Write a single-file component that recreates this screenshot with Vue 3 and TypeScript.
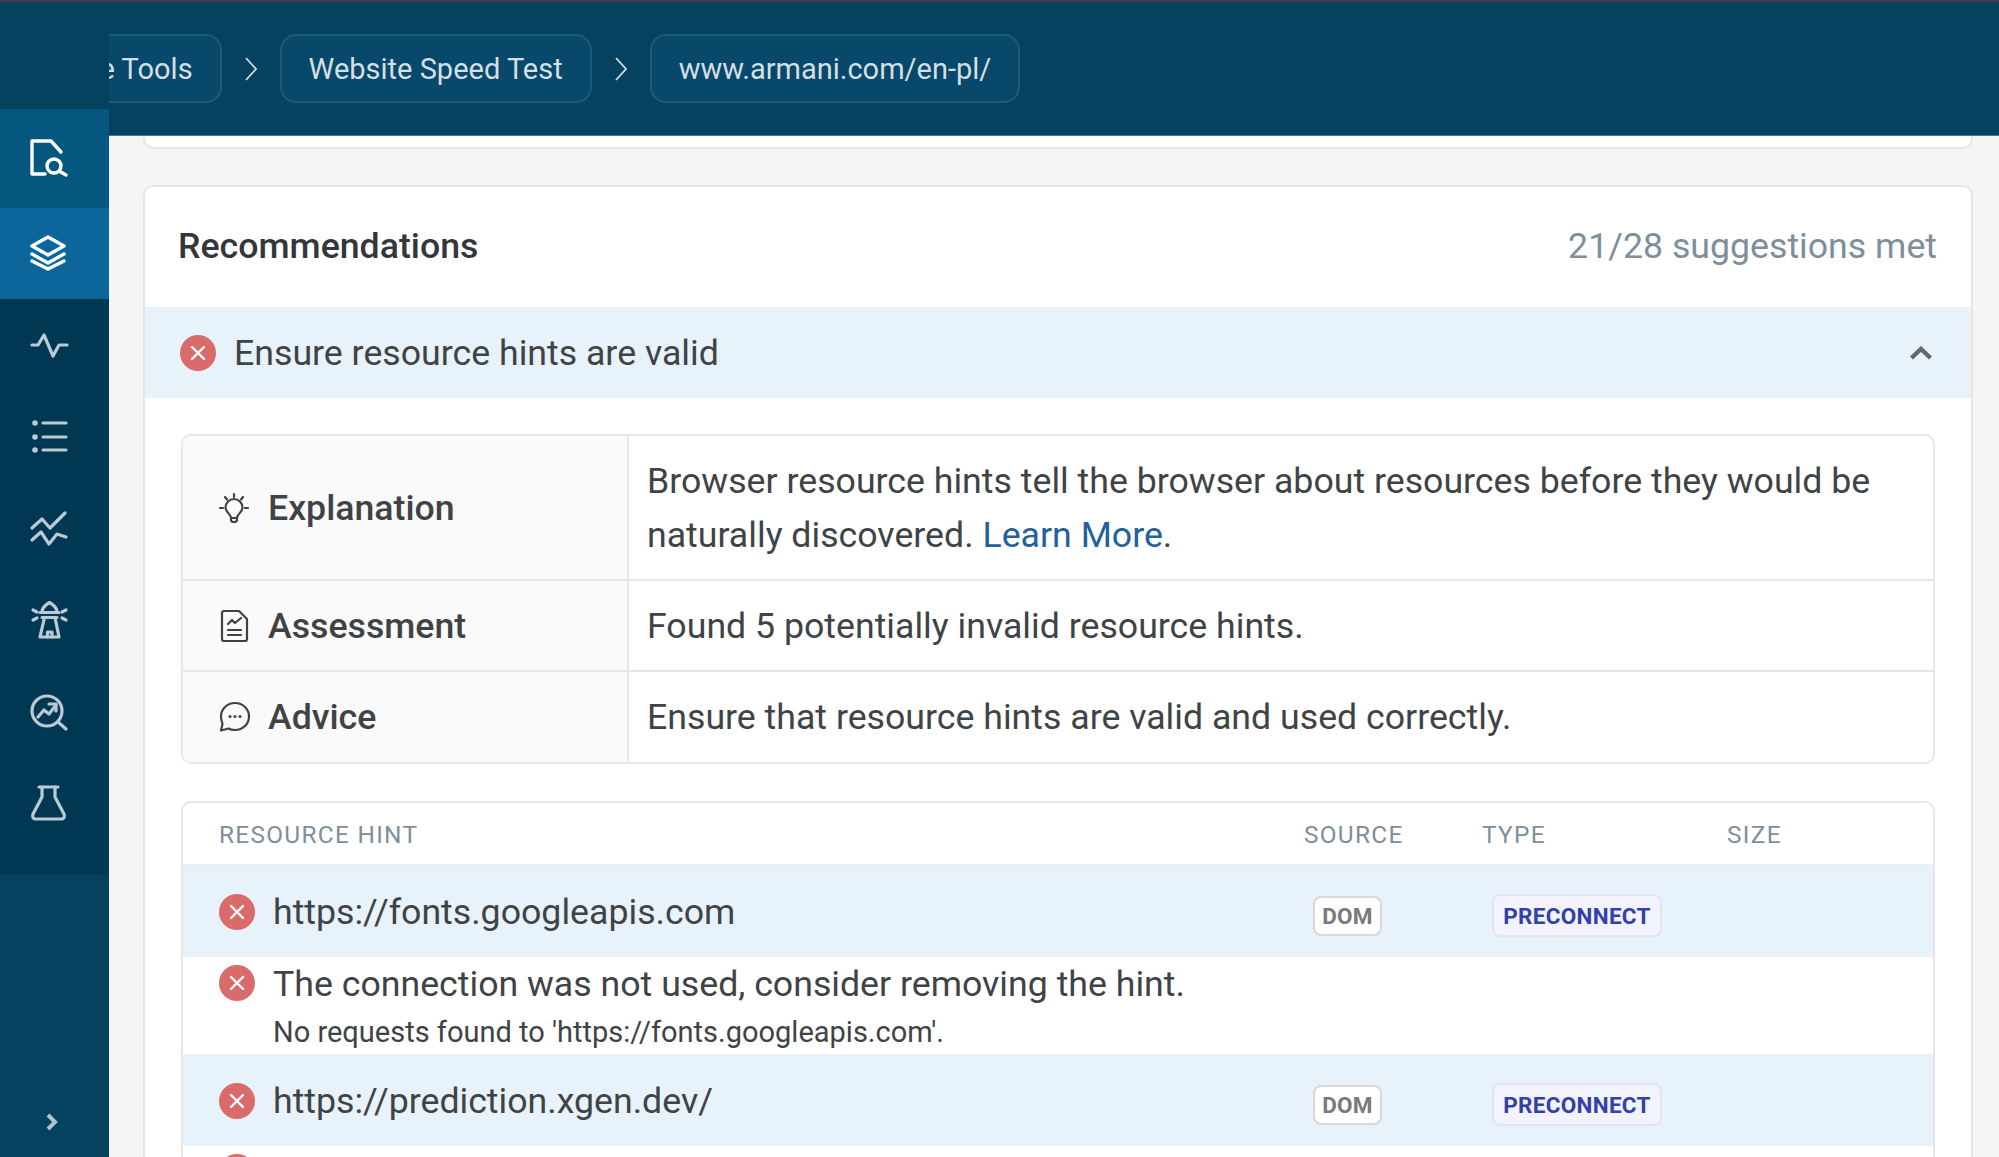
<script setup lang="ts">
const hints = [
  { url: 'https://fonts.googleapis.com', msg: 'The connection was not used, consider removing the hint.', sub: "No requests found to 'https://fonts.googleapis.com'." },
  { url: 'https://prediction.xgen.dev/', msg: 'The connection was not used, consider removing the hint.', sub: "No requests found to 'https://prediction.xgen.dev/'." }
]
</script>

<template>
  <div class="app">
    <aside class="side">
      <div class="side-top"></div>
      <div class="nav n1">
        <svg class="ic" viewBox="0 0 36 36"><path d="M14 34H1V1H20L30 12" /><circle cx="23" cy="26" r="7" /><path d="M28 31L35 35" /></svg>
      </div>
      <div class="nav n2">
        <svg class="ic" viewBox="0 0 36 36"><path d="M17 1L33 10L17 19L1 10Z" /><path d="M1 18L17 27L33 18" /><path d="M1 25L17 33L33 25" /></svg>
      </div>
      <div class="dark">
        <div class="nav">
          <svg class="ic" viewBox="0 0 36 36"><path d="M1 17H7L13 7L22 28L28 17H36" /></svg>
        </div>
        <div class="nav">
          <svg class="ic" viewBox="0 0 36 36"><circle class="fill" cx="4" cy="4" r="2.8" /><circle class="fill" cx="4" cy="18" r="2.8" /><circle class="fill" cx="4" cy="31" r="2.8" /><path d="M12 4H35M12 18H35M12 31H35" /></svg>
        </div>
        <div class="nav">
          <svg class="ic" viewBox="0 0 36 36"><path d="M1 17L11 8L19 17L34 2" /><path d="M1 29L10 21L18 33L26 23L35 26" /></svg>
        </div>
        <div class="nav">
          <svg class="ic" viewBox="0 0 36 36"><path d="M11 10C11 5 15 2.5 18.5 0.5C22 2.5 26 5 26 10" /><path d="M9 10.5H28M11 15.5H26" /><path d="M13.5 15.5L9 35H28L24 15.5" /><path d="M16.5 35V30H21V35" /><path d="M2 8L6 10M2 18L6 16M35 8L31 10M35 18L31 16" /></svg>
        </div>
        <div class="nav">
          <svg class="ic" viewBox="0 0 36 36"><circle cx="16" cy="17" r="15" /><path d="M27 28L35 35" /><path d="M7 23L13 16L18 20L25 11" /><path d="M18 10H25V17" /></svg>
        </div>
        <div class="nav">
          <svg class="ic" viewBox="0 0 36 36"><path d="M8 2H27" /><path d="M11 2V12L2 29C1 32 2 34 5 34H30C33 34 34 32 33 29L24 12V2" /></svg>
        </div>
      </div>
      <div class="side-foot">
        <svg class="expand" viewBox="0 0 12 18"><path d="M2 2L9 9L2 16" /></svg>
      </div>
    </aside>

    <main class="main">
      <header class="top">
        <nav class="crumbs">
          <a class="crumb first">Free Tools</a>
          <svg class="sep" viewBox="0 0 14 26"><path d="M2 2L12 13L2 24" /></svg>
          <a class="crumb">Website Speed Test</a>
          <svg class="sep" viewBox="0 0 14 26"><path d="M2 2L12 13L2 24" /></svg>
          <a class="crumb">www.armani.com/en-pl/</a>
        </nav>
      </header>

      <div class="content">
        <div class="stub"></div>
        <section class="card">
          <div class="card-head">
            <h2>Recommendations</h2>
            <span class="met">21/28 suggestions met</span>
          </div>
          <div class="rec-row">
            <svg class="err" viewBox="0 0 36 36"><circle cx="18" cy="18" r="18" /><path d="M12 12L24 24M24 12L12 24" /></svg>
            <span class="rec-title">Ensure resource hints are valid</span>
            <svg class="up" viewBox="0 0 24 14"><path d="M2.5 12L12 3L21.5 12" /></svg>
          </div>

          <div class="panel">
            <div class="p-row tall">
              <div class="p-label">
                <svg class="lab-ic" viewBox="0 0 30 30"><path d="M15 1V4M6 4L8 6.5M24 4L22 6.5M1 15H4M26 15H29" /><path d="M12 25C12 21 6.5 19.5 6.5 14.5C6.5 10 10.5 6 15 6C19.5 6 23.5 10 23.5 14.5C23.5 19.5 18 21 18 25Z" /><path d="M12 25V27C12 28.5 13 29 15 29C17 29 18 28.5 18 27V25" /></svg>
                <span>Explanation</span>
              </div>
              <div class="p-val">Browser resource hints tell the browser about resources before they would be naturally discovered. <a class="link">Learn More</a>.</div>
            </div>
            <div class="p-row">
              <div class="p-label">
                <svg class="lab-ic" viewBox="0 0 30 30"><path d="M5 0H20L28 8V28C28 29 27 30 26 30H5C4 30 3 29 3 28V2C3 1 4 0 5 0Z" /><path d="M9 13L13 9L16 12L22 7" /><path d="M9 19H22M9 24H22" /></svg>
                <span>Assessment</span>
              </div>
              <div class="p-val">Found 5 potentially invalid resource hints.</div>
            </div>
            <div class="p-row last">
              <div class="p-label">
                <svg class="lab-ic" viewBox="0 0 30 30"><path d="M16 1C24 1 30 7 30 14.5C30 22 24 28 16 28C13 28 11 27.5 9.5 26.5L2 28.5L3.5 22C2.5 19.5 2 17 2 14.5C2 7 8 1 16 1Z" /><circle class="dot" cx="11" cy="14.5" r="1.5" /><circle class="dot" cx="16" cy="14.5" r="1.5" /><circle class="dot" cx="21" cy="14.5" r="1.5" /></svg>
                <span>Advice</span>
              </div>
              <div class="p-val">Ensure that resource hints are valid and used correctly.</div>
            </div>
          </div>

          <div class="table">
            <div class="t-head">
              <span>RESOURCE HINT</span>
              <span>SOURCE</span>
              <span>TYPE</span>
              <span>SIZE</span>
            </div>
            <template v-for="h in hints" :key="h.url">
              <div class="t-row">
                <div class="url-cell">
                  <svg class="err" viewBox="0 0 36 36"><circle cx="18" cy="18" r="18" /><path d="M12 12L24 24M24 12L12 24" /></svg>
                  <span class="url">{{ h.url }}</span>
                </div>
                <div class="c-src"><span class="dom">DOM</span></div>
                <div class="c-type"><span class="pre">PRECONNECT</span></div>
                <div></div>
              </div>
              <div class="t-detail">
                <svg class="err" viewBox="0 0 36 36"><circle cx="18" cy="18" r="18" /><path d="M12 12L24 24M24 12L12 24" /></svg>
                <div class="d-text">
                  <div class="d-msg">{{ h.msg }}</div>
                  <div class="d-sub">{{ h.sub }}</div>
                </div>
              </div>
            </template>
          </div>
        </section>
      </div>
    </main>
  </div>
</template>

<style>
html, body { margin: 0; background: #f5f5f5; }
</style>

<style scoped>
.app {
  display: flex;
  height: 1157px;
  overflow: hidden;
  font-family: Roboto, "Liberation Sans", sans-serif;
  color: #3f4346;
  background: #f5f5f5;
}
.side {
  width: 109px;
  flex: none;
  display: flex;
  flex-direction: column;
  background: #04425f;
  border-top: 2px solid #4a3b49;
  box-sizing: border-box;
}
.side-top { height: 107px; flex: none; }
.nav {
  height: 91.5px;
  flex: none;
  display: flex;
  align-items: center;
  padding-left: 31px;
  box-sizing: border-box;
}
.n1 { height: 99px; padding-bottom: 2px; background: #06577f; }
.n2 { height: 91px; background: #0c659b; }
.dark { background: #003753; padding: 1px 0 26px; }
.ic { width: 36px; height: 36px; overflow: visible; }
.ic path, .ic circle {
  fill: none;
  stroke: #bccad3;
  stroke-width: 3.2;
  stroke-linecap: round;
  stroke-linejoin: round;
}
.ic circle.fill { fill: #bccad3; stroke: none; }
.n1 .ic path, .n1 .ic circle, .n2 .ic path { stroke: #fff; stroke-width: 3.4; }
.side-foot {
  flex: 1;
  display: flex;
  align-items: flex-end;
  padding: 0 0 26px 46px;
}
.expand { width: 12px; height: 18px; }
.expand path { fill: none; stroke: #b3c2cc; stroke-width: 4; }

.main { flex: 1; min-width: 0; display: flex; flex-direction: column; }
.top {
  height: 136px;
  flex: none;
  box-sizing: border-box;
  background: #04425f;
  border-top: 2px solid #4a3b49;
  border-bottom: 1px solid #3f7a94;
  display: flex;
  align-items: flex-start;
  overflow: hidden;
  padding-top: 32px;
}
.crumbs { display: flex; align-items: center; margin-left: -79px; }
.crumb {
  height: 69px;
  box-sizing: border-box;
  display: flex;
  align-items: center;
  padding: 0 27px;
  font-size: 29px;
  color: #d4dfe5;
  background: #08486a;
  border: 2px solid #1f5a78;
  border-radius: 16px;
  white-space: nowrap;
}
.sep { width: 14px; height: 26px; margin: 0 22px; flex: none; }
.sep path { fill: none; stroke: #d4dfe5; stroke-width: 1.8; }

.content { flex: 1; padding: 0 26px 0 34px; min-height: 0; }
.stub {
  height: 13px;
  background: #fff;
  border: 2px solid #e6e6e6;
  border-top: 0;
  border-radius: 0 0 10px 10px;
  box-sizing: border-box;
  margin-bottom: 36px;
}
.card {
  background: #fff;
  border: 2px solid #e6e6e6;
  border-bottom: 0;
  border-radius: 10px 10px 0 0;
}
.card-head {
  height: 117px;
  padding: 0 34px 3px 33px;
  display: flex;
  align-items: center;
  justify-content: space-between;
}
.card-head h2 {
  margin: 0;
  font-size: 35.7px;
  font-weight: 500;
  color: #33363a;
}
.met { font-size: 35.7px; color: #7e8e9b; }
.rec-row {
  height: 91px;
  background: #e8f2fb;
  display: flex;
  align-items: center;
  padding: 0 38px 0 35px;
}
.err { width: 36px; height: 36px; flex: none; }
.err circle { fill: #d96b6b; }
.err path { stroke: #fff; stroke-width: 2.4; stroke-linecap: round; fill: none; }
.rec-title { margin-left: 18px; font-size: 35.7px; flex: 1; }
.up { width: 24px; height: 14px; }
.up path { fill: none; stroke: #666; stroke-width: 4.4; }

.panel {
  margin: 36px 36px 0 36px;
  border: 2px solid #e6e6e6;
  border-radius: 10px;
  overflow: hidden;
}
.p-row {
  display: flex;
  height: 91px;
  border-top: 2px solid #e6e6e6;
  box-sizing: border-box;
}
.p-row:first-child { border-top: 0; }
.p-row.tall { height: 143px; }
.p-row.last { height: 92px; }
.p-label {
  width: 446px;
  flex: none;
  box-sizing: border-box;
  background: #fafafa;
  border-right: 2px solid #e6e6e6;
  display: flex;
  align-items: center;
  gap: 19px;
  padding-left: 36px;
  font-size: 35.7px;
  font-weight: 500;
}
.lab-ic { width: 30px; height: 30px; flex: none; overflow: visible; }
.lab-ic path { fill: none; stroke: #3f4245; stroke-width: 2.2; stroke-linecap: round; stroke-linejoin: round; }
.lab-ic .dot { fill: #3f4245; }
.p-val {
  flex: 1;
  align-self: center;
  padding: 0 40px 0 18px;
  font-size: 35.7px;
  line-height: 54px;
}
.link { color: #23609e; }

.table {
  margin: 37px 36px 0 36px;
  border: 2px solid #e6e6e6;
  border-bottom: 0;
  border-radius: 10px 10px 0 0;
}
.t-head, .t-row {
  display: grid;
  grid-template-columns: 1121px 178px 245px 1fr;
  align-items: center;
}
.t-head {
  height: 63px;
  padding-top: 2px;
  font-size: 24.4px;
  letter-spacing: 1.3px;
  color: #7e8e9b;
  box-sizing: border-box;
  border-bottom: 2px solid #eeeeee;
}
.t-head span:first-child { padding-left: 36px; }
.t-row {
  height: 91px;
  background: #e8f2fb;
}
.url-cell { display: flex; align-items: center; padding-left: 36px; }
.url { margin-left: 18px; font-size: 35.7px; }
.c-src { padding: 8px 0 0 9px; }
.c-type { padding: 8px 0 0 10px; }
.dom, .pre {
  display: inline-flex;
  align-items: center;
  justify-content: center;
  box-sizing: border-box;
  font-size: 22.5px;
  font-weight: 700;
  letter-spacing: 0.3px;
  border-radius: 8px;
}
.dom {
  width: 69px;
  height: 40px;
  color: #7a7a7a;
  background: #fff;
  border: 2px solid #d8d8d8;
}
.pre {
  width: 170px;
  height: 43px;
  color: #3340aa;
  background: #f2f3fd;
  border: 2px solid #e2e4f5;
}
.t-detail {
  height: 98px;
  background: #fff;
  display: flex;
  align-items: flex-start;
  padding: 8px 0 0 36px;
  box-sizing: border-box;
  border-bottom: 1px solid #eeeeee;
}
.d-text { margin-left: 18px; }
.d-msg { font-size: 35.7px; line-height: 50px; margin-top: -6px; }
.d-sub { font-size: 29px; line-height: 36px; margin-top: 5px; }
</style>
